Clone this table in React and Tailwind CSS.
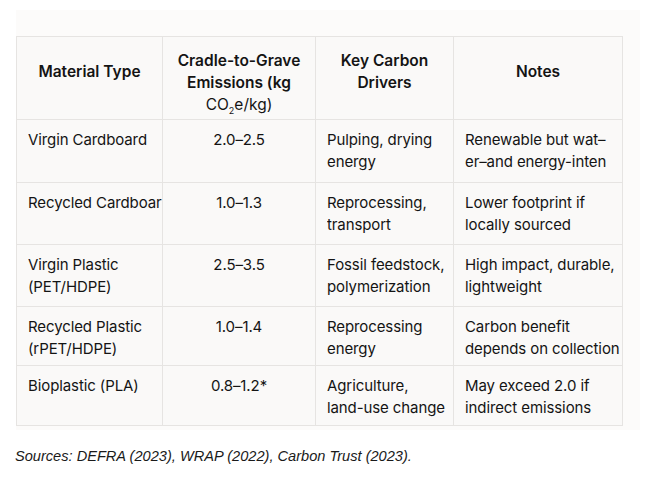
import React from 'react'

const rows = [
  { h: 'h-[63px]', mat: ['Virgin Cardboard'], em: '2.0–2.5', drv: ['Pulping, drying', 'energy'], note: ['Renewable but wat–', 'er–and energy-inten'] },
  { h: 'h-[62px]', mat: ['Recycled Cardboar'], em: '1.0–1.3', drv: ['Reprocessing,', 'transport'], note: ['Lower footprint if', 'locally sourced'] },
  { h: 'h-[62px]', mat: ['Virgin Plastic', '(PET/HDPE)'], em: '2.5–3.5', drv: ['Fossil feedstock,', 'polymerization'], note: ['High impact, durable,', 'lightweight'] },
  { h: 'h-[59px]', mat: ['Recycled Plastic', '(rPET/HDPE)'], em: '1.0–1.4', drv: ['Reprocessing', 'energy'], note: ['Carbon benefit', 'depends on collection'] },
  { h: 'h-[60px]', mat: ['Bioplastic (PLA)'], em: '0.8–1.2*', drv: ['Agriculture,', 'land-use change'], note: ['May exceed 2.0 if', 'indirect emissions'] },
]

const Lines = ({ lines }) =>
  lines.map((l, i) => (
    <div key={i} className="whitespace-nowrap overflow-hidden">{l}</div>
  ))

export default function App() {
  return (
    <div className="w-[650px] h-[477px] bg-white overflow-hidden">
      <div className="pt-[10px] pl-[16px]">
        <div className="w-[624px] h-[420px] bg-[#fcfbfa] pt-[26px]">
          <table
            className="table-fixed border-collapse w-[606px] bg-[#faf9f8] text-[15px] leading-[22px] text-[#141414] tracking-[-0.1px]"
            style={{ fontFamily: 'Inter, "Noto Sans", sans-serif' }}
          >
            <colgroup>
              <col className="w-[146px]" />
              <col className="w-[153px]" />
              <col className="w-[138px]" />
              <col className="w-[169px]" />
            </colgroup>
            <thead>
              <tr className="h-[83px] text-center text-[15.5px] tracking-normal">
                <th className="border border-[#e6e4e2] align-top pt-[24px] font-semibold">Material Type</th>
                <th className="border border-[#e6e4e2] align-top pt-[13px] font-semibold">
                  <div>Cradle-to-Grave</div>
                  <div>Emissions (kg</div>
                  <div className="font-normal">CO<sub className="text-[9px] align-[-2px]">2</sub>e/kg)</div>
                </th>
                <th className="border border-[#e6e4e2] align-top pt-[13px] font-semibold">
                  <div>Key Carbon</div>
                  <div>Drivers</div>
                </th>
                <th className="border border-[#e6e4e2] align-top pt-[24px] font-semibold">Notes</th>
              </tr>
            </thead>
            <tbody>
              {rows.map((r, i) => (
                <tr key={i} className={r.h}>
                  <td className="border border-[#e6e4e2] align-top pt-[9px] pl-[11px] pr-0">
                    <Lines lines={r.mat} />
                  </td>
                  <td className="border border-[#e6e4e2] align-top pt-[9px] text-center">{r.em}</td>
                  <td className="border border-[#e6e4e2] align-top pt-[9px] pl-[11px] pr-0">
                    <Lines lines={r.drv} />
                  </td>
                  <td className="border border-[#e6e4e2] align-top pt-[9px] pl-[11px] pr-0">
                    <Lines lines={r.note} />
                  </td>
                </tr>
              ))}
            </tbody>
          </table>
        </div>
      </div>
      <p
        className="mt-[18px] pl-[15px] italic text-[14.6px] leading-[17px] text-[#1a1a1a]"
        style={{ fontFamily: '"Liberation Sans", Arial, sans-serif' }}
      >
        Sources: DEFRA (2023), WRAP (2022), Carbon Trust (2023).
      </p>
    </div>
  )
}
